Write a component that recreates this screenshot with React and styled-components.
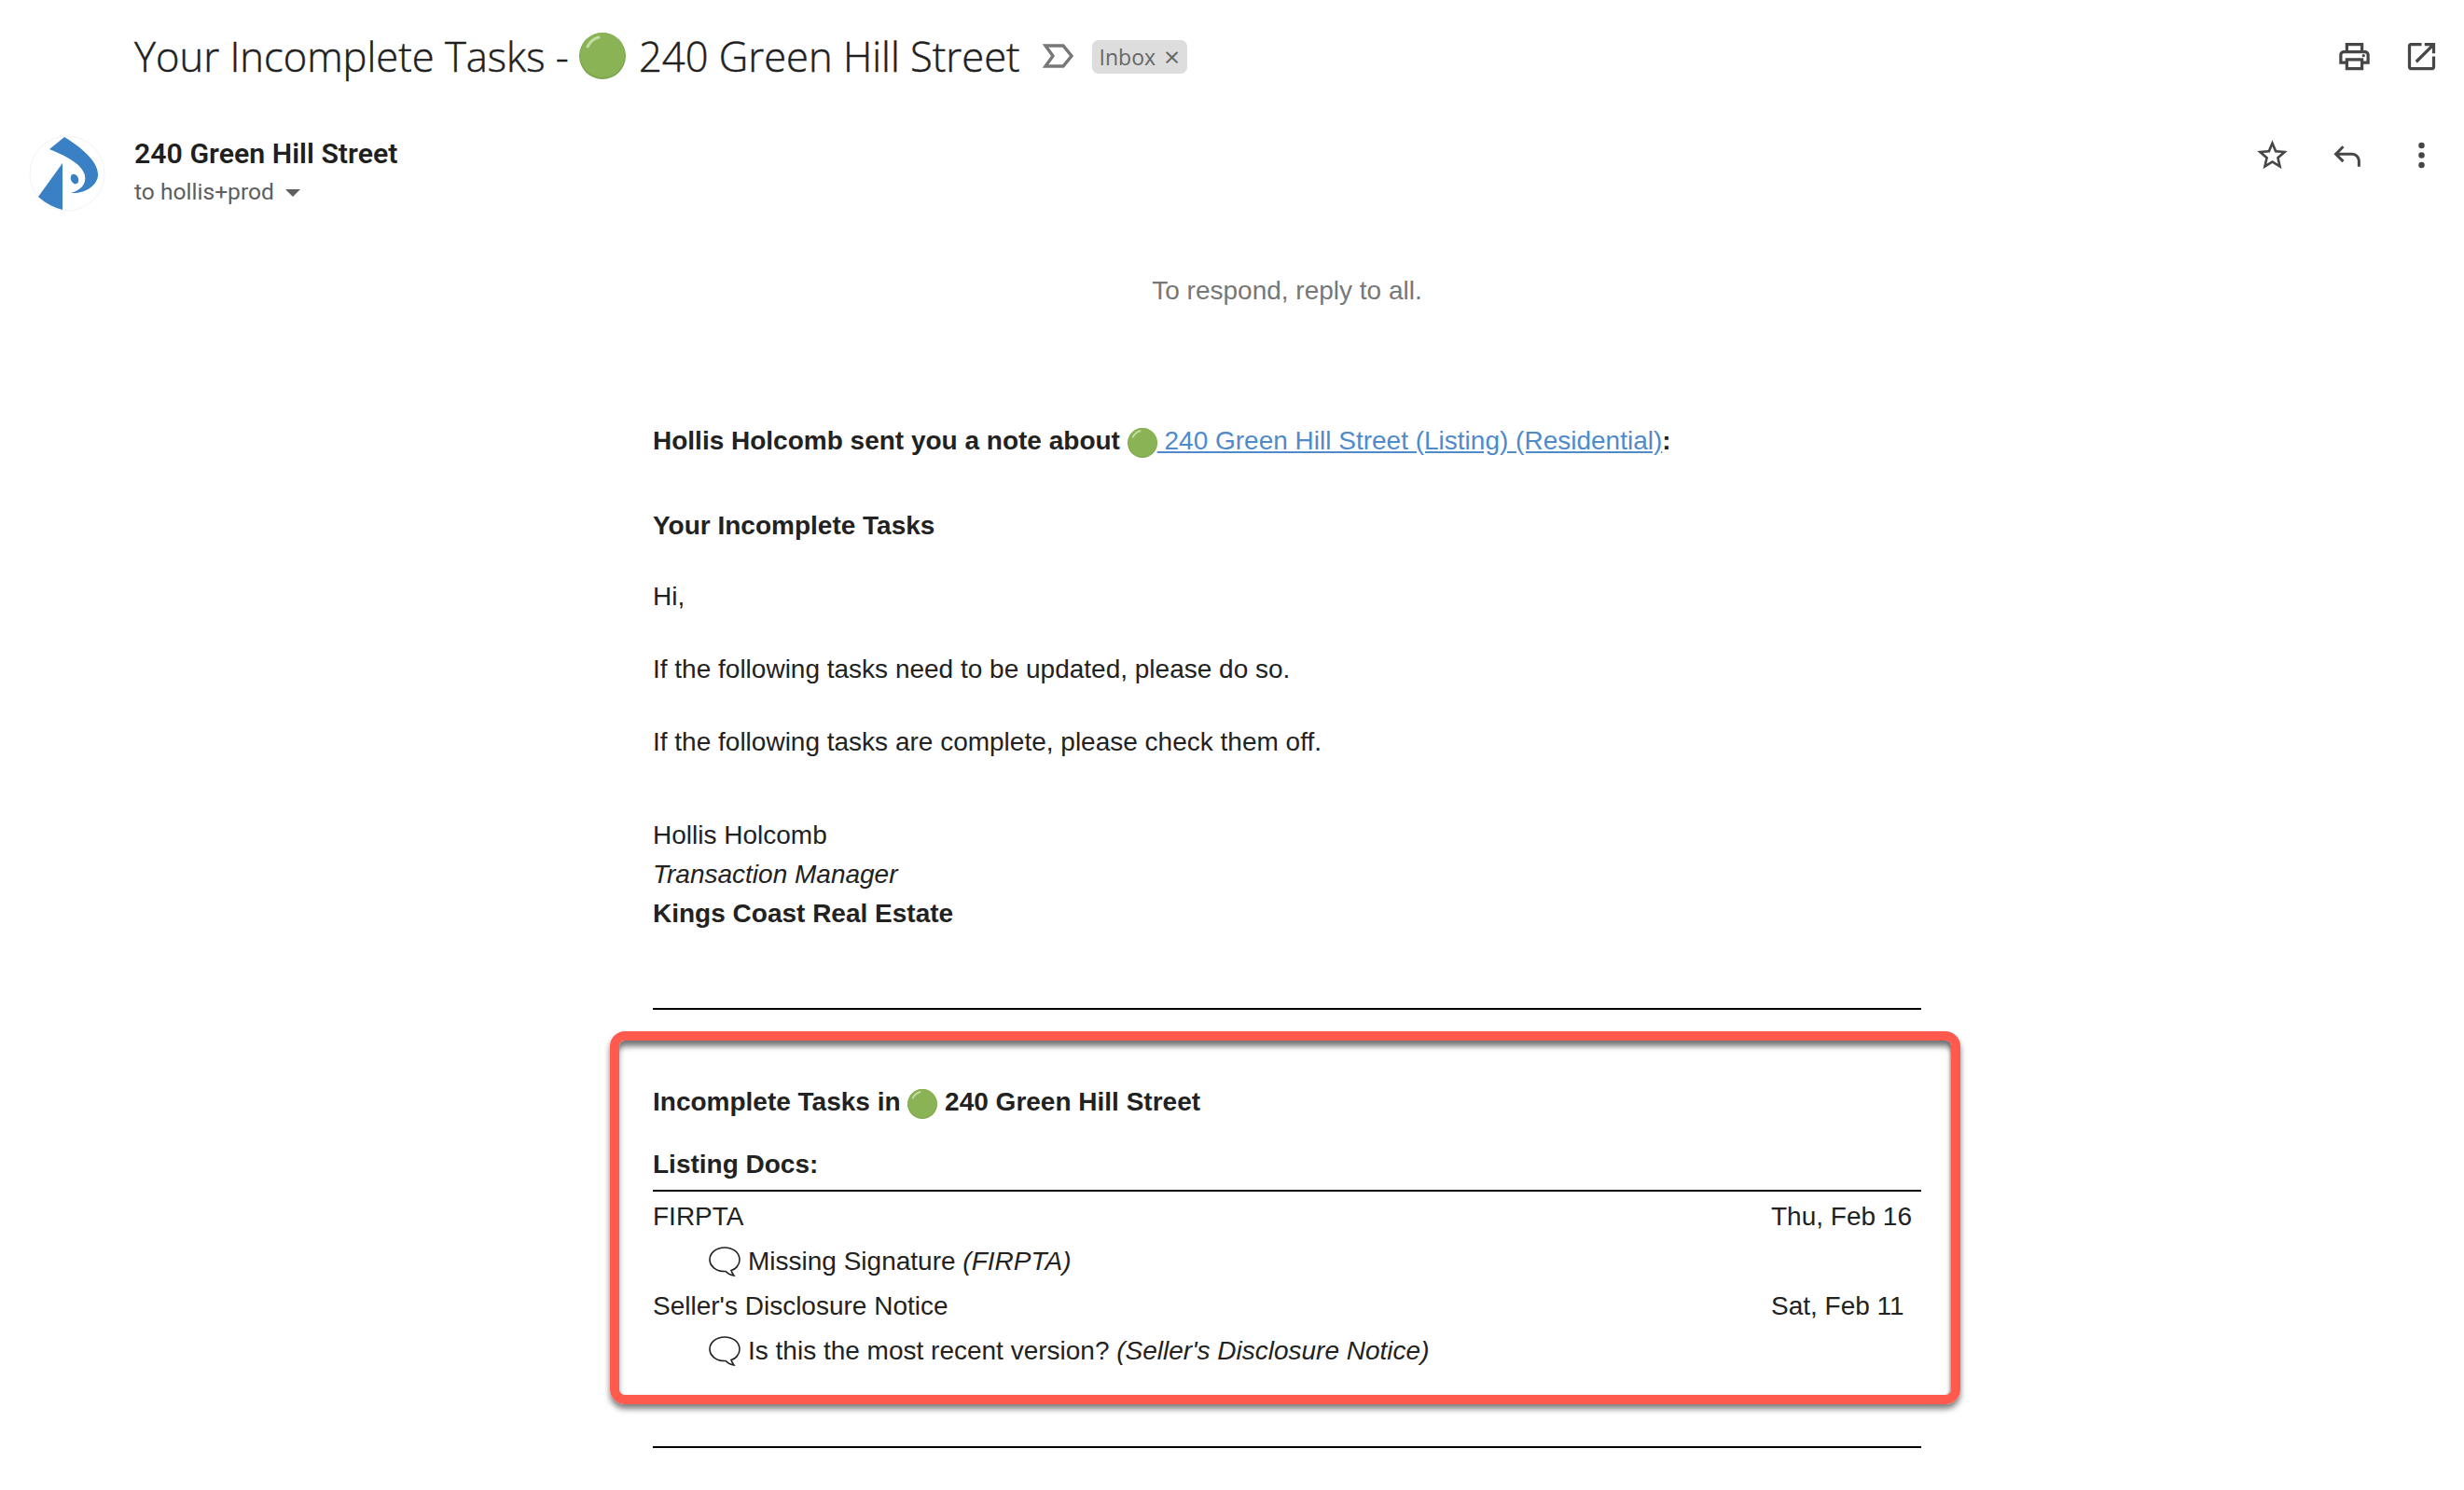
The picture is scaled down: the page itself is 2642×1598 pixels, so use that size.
import React from 'react'
import styled, { createGlobalStyle } from 'styled-components'

const GlobalStyle = createGlobalStyle`
    html, body {
        margin: 0;
        padding: 0;
        background: #fff;
    }
    body {
        font-family: "Liberation Sans", Arial, sans-serif;
        overflow: hidden;
    }
`

const Page = styled.div`
    width: 2642px;
    height: 1598px;
    overflow: hidden;
    background: #fff;
`

const SubjectBar = styled.header`
    display: flex;
    align-items: center;
    height: 120px;
    padding: 0 26px 0 144px;
`

const Subject = styled.h1`
    display: flex;
    align-items: center;
    margin: 0;
    font-family: "Open Sans", sans-serif;
    font-size: 43.5px;
    font-weight: 300;
    -webkit-text-stroke: 0.5px #1f1f1f;
    color: #1f1f1f;
    white-space: pre;
`

const ImportanceIcon = styled.svg`
    width: 36px;
    height: 28px;
    margin-left: 24px;
`

const InboxChip = styled.span`
    display: flex;
    align-items: center;
    gap: 9px;
    height: 36px;
    margin: 2px 0 0 17px;
    padding: 0 8px;
    border-radius: 7px;
    background: #dddddd;
    color: #666;
    font-family: "Open Sans", sans-serif;
    font-size: 23px;
`

const ChipClose = styled.span`
    font-size: 30px;
    line-height: 1;
`

const TopActions = styled.div`
    display: flex;
    align-items: center;
    gap: 33px;
    margin-left: auto;
`

const Icon = styled.svg`
    width: 39px;
    height: 39px;
    fill: #444746;
    display: block;
`

const SenderRow = styled.div`
    display: grid;
    grid-template-columns: 144px 1fr auto;
    height: 130px;
    padding-right: 26px;
`

const Avatar = styled.svg`
    width: 84px;
    height: 84px;
    margin: 24px 0 0 30px;
`

const SenderInfo = styled.div`
    display: flex;
    flex-direction: column;
    padding-top: 25px;
`

const SenderName = styled.div`
    font-family: Roboto, sans-serif;
    font-size: 30.3px;
    font-weight: 600;
    line-height: 40px;
    color: #1f1f1f;
`

const Recipients = styled.div`
    display: flex;
    align-items: center;
    gap: 12px;
    margin-top: 3px;
    font-family: Roboto, sans-serif;
    font-size: 24.6px;
    line-height: 36px;
    color: #5e5e5e;
`

const Caret = styled.span`
    width: 0;
    height: 0;
    margin-top: 2px;
    border-left: 8px solid transparent;
    border-right: 8px solid transparent;
    border-top: 8px solid #5e5e5e;
`

const SenderActions = styled.div`
    display: flex;
    gap: 41px;
    padding-top: 27px;
`

const MessageColumn = styled.main`
    width: 1360px;
    margin-left: 700px;
    font-size: 28px;
    line-height: 42px;
    color: #222;
`

const Notice = styled.p`
    margin: 41px 0 0;
    text-align: center;
    color: #777;
`

const Paragraph = styled.p`
    margin: ${props => props.$top}px 0 0;
    font-weight: ${props => props.$bold ? 700 : 400};
`

const EmailLink = styled.a`
    color: #4f8acb;
    font-weight: 400;
    text-decoration: underline;
`

const Signature = styled.div`
    margin-top: 58px;
`

const SignatureLine = styled.div`
    font-weight: ${props => props.$bold ? 700 : 400};
    font-style: ${props => props.$italic ? 'italic' : 'normal'};
`

const Rule = styled.hr`
    height: 2px;
    margin: ${props => props.$top}px 0 0;
    border: 0;
    background: #000;
`

const HighlightBox = styled.section`
    box-sizing: border-box;
    height: 400px;
    margin: 23px -42px 0 -46px;
    padding: 43px 32px 0 36px;
    border: 10px solid #ff5a4d;
    border-radius: 16px;
    box-shadow: 0 5px 6px rgba(0, 0, 0, 0.5), inset 0 7px 6px -1px rgba(0, 0, 0, 0.55), inset -2px 0 3px -1px rgba(0, 0, 0, 0.25);
`

const BoxTitle = styled.div`
    font-weight: 700;
    line-height: 46px;
`

const SectionTitle = styled.div`
    margin-top: 21px;
    font-weight: 700;
    line-height: 46px;
`

const SectionRule = styled.hr`
    height: 2px;
    margin: 4px 0 3px;
    border: 0;
    background: #000;
`

const TaskRow = styled.div`
    display: grid;
    grid-template-columns: 1fr 161px;
    height: 48px;
    align-items: center;
`

const NoteRow = styled.div`
    display: flex;
    align-items: center;
    height: 48px;
    padding-left: 60px;
    gap: 8px;
`

const NoteIcon = styled.svg`
    width: 34px;
    height: 32px;
    flex: none;
`

const Italic = styled.em`
    font-style: italic;
`

const Orb = ({ size, right = 0, left = 0 }) => (
    <svg
        width={size}
        height={size}
        viewBox="0 0 50 50"
        style={{ marginLeft: left, marginRight: right, verticalAlign: 'middle', flex: 'none' }}
    >
        <circle cx="25" cy="25" r="25" fill="#7da64e" />
        <circle cx="25" cy="24" r="24" fill="#8ab356" />
        <path d="M9 15 Q13 7 21 5" stroke="#c4dca6" strokeWidth="3" fill="none" strokeLinecap="round" />
    </svg>
)

const Bubble = () => (
    <NoteIcon viewBox="0 0 34 32">
        <path
            d="M17 1 C26 1 33 6.5 33 14 C33 20 28.5 24.5 24 25.5 C24.5 27.5 26 29.5 27 31 C23.5 30.5 20 28.5 18 26.5 C8 27 1 21 1 14 C1 6.5 8 1 17 1 Z"
            fill="#fff"
            stroke="#222"
            strokeWidth="1.6"
        />
    </NoteIcon>
)

const App = () => {
    return (
        <Page>
            <GlobalStyle />

            <SubjectBar>
                <Subject>
                    Your Incomplete Tasks - <Orb size={50} right={14} />240 Green Hill Street
                </Subject>
                <ImportanceIcon viewBox="0 0 36 28">
                    <path d="M3 3 H22 L31 14 L22 25 H3 L11 14 Z" fill="none" stroke="#777" strokeWidth="3.4" />
                </ImportanceIcon>
                <InboxChip>Inbox <ChipClose>×</ChipClose></InboxChip>
                <TopActions>
                    <Icon viewBox="0 0 24 24">
                        <path d="M19 8h-1V3H6v5H5c-1.66 0-3 1.34-3 3v6h4v4h12v-4h4v-6c0-1.66-1.34-3-3-3zM8 5h8v3H8V5zm8 12v2H8v-4h8v2zm2-2v-2H6v2H4v-4c0-.55.45-1 1-1h14c.55 0 1 .45 1 1v4h-2z" />
                        <circle cx="18" cy="11.5" r="1" />
                    </Icon>
                    <Icon viewBox="0 0 24 24">
                        <path d="M19 19H5V5h7V3H5c-1.11 0-2 .9-2 2v14c0 1.1.89 2 2 2h14c1.1 0 2-.9 2-2v-7h-2v7zM14 3v2h3.59l-9.83 9.83 1.41 1.41L19 6.41V10h2V3h-7z" />
                    </Icon>
                </TopActions>
            </SubjectBar>

            <SenderRow>
                <Avatar viewBox="30 144 84 84">
                    <circle cx="72" cy="186" r="40" fill="#fff" stroke="#f3f3f3" strokeWidth="1" />
                    <path d="M69 147 C87 158 104 172 105 186 C106 198 92 208 76 207 C86 204 93 198 91 188 C88 176 72 168 53 160 Z" fill="#3a80c4" />
                    <path d="M67 175 L41 211 Q52 221 67 225 Z" fill="#3a80c4" />
                    <ellipse cx="80" cy="192" rx="4" ry="5.5" transform="rotate(-25 80 192)" fill="#3a80c4" />
                </Avatar>
                <SenderInfo>
                    <SenderName>240 Green Hill Street</SenderName>
                    <Recipients>to hollis+prod <Caret /></Recipients>
                </SenderInfo>
                <SenderActions>
                    <Icon viewBox="0 0 24 24">
                        <path d="M22 9.24l-7.19-.62L12 2 9.19 8.63 2 9.24l5.46 4.73L5.82 21 12 17.27 18.18 21l-1.63-7.03L22 9.24zM12 15.4l-3.76 2.27 1-4.28-3.32-2.88 4.38-.38L12 6.1l1.71 4.04 4.38.38-3.32 2.88 1 4.28L12 15.4z" />
                    </Icon>
                    <Icon viewBox="0 0 24 24">
                        <path d="M20 19v-4c0-2.21-1.79-4-4-4H6.83l3.59 3.59L9 16l-6-6 6-6 1.41 1.41L6.83 9H16c3.31 0 6 2.69 6 6v4h-2z" transform="translate(.6 2) scale(.92)" />
                    </Icon>
                    <Icon viewBox="0 0 24 24">
                        <circle cx="12" cy="5.5" r="2" />
                        <circle cx="12" cy="12" r="2" />
                        <circle cx="12" cy="18.5" r="2" />
                    </Icon>
                </SenderActions>
            </SenderRow>

            <MessageColumn>
                <Notice>To respond, reply to all.</Notice>

                <Paragraph $bold $top={119}>
                    Hollis Holcomb sent you a note about <Orb size={32} />
                    <EmailLink href="#"> 240 Green Hill Street (Listing) (Residential)</EmailLink>:
                </Paragraph>
                <Paragraph $bold $top={49}>Your Incomplete Tasks</Paragraph>
                <Paragraph $top={34}>Hi,</Paragraph>
                <Paragraph $top={36}>If the following tasks need to be updated, please do so.</Paragraph>
                <Paragraph $top={36}>If the following tasks are complete, please check them off.</Paragraph>

                <Signature>
                    <SignatureLine>Hollis Holcomb</SignatureLine>
                    <SignatureLine $italic>Transaction Manager</SignatureLine>
                    <SignatureLine $bold>Kings Coast Real Estate</SignatureLine>
                </Signature>

                <Rule $top={80} />

                <HighlightBox>
                    <BoxTitle>Incomplete Tasks in <Orb size={32} /> 240 Green Hill Street</BoxTitle>
                    <SectionTitle>Listing Docs:</SectionTitle>
                    <SectionRule />
                    <TaskRow><span>FIRPTA</span><span>Thu, Feb 16</span></TaskRow>
                    <NoteRow><Bubble /><span>Missing Signature <Italic>(FIRPTA)</Italic></span></NoteRow>
                    <TaskRow><span>Seller's Disclosure Notice</span><span>Sat, Feb 11</span></TaskRow>
                    <NoteRow><Bubble /><span>Is this the most recent version? <Italic>(Seller's Disclosure Notice)</Italic></span></NoteRow>
                </HighlightBox>

                <Rule $top={45} />
            </MessageColumn>
        </Page>
    )
}

export default App
